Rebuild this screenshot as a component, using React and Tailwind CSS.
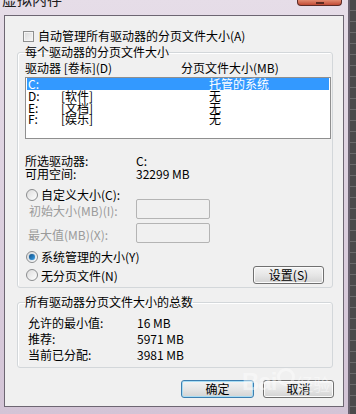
import React from "react";

function Radio({ checked }) {
  return (
    <span className="relative flex h-[12px] w-[12px] shrink-0 items-center justify-center rounded-full border border-[#8a8c8e] bg-gradient-to-br from-[#dcdcdc] to-[#ffffff]">
      {checked && (
        <span className="h-[6px] w-[6px] rounded-full bg-gradient-to-br from-[#0f4f86] to-[#3aa0e8] shadow-[0_0_1px_#1b6bb0]" />
      )}
    </span>
  );
}

function Btn({ children, w, def }) {
  return (
    <div
      className={
        "flex h-[18px] items-center justify-center rounded-[3px] border bg-gradient-to-b from-[#f4f4f4] via-[#e6e6e6] to-[#d3d3d3] text-[12px] leading-[12px] text-black " +
        (def
          ? "border-[#3c7fb1] shadow-[inset_0_0_0_1px_#a8dcf3]"
          : "border-[#707070] shadow-[inset_0_0_0_1px_#fbfbfb]")
      }
      style={{ width: w }}
    >
      {children}
    </div>
  );
}

export default function App() {
  return (
    <div className="flex h-[414px] w-[356px] overflow-hidden bg-[#4a4a4a] font-['Noto_Sans_CJK_SC',sans-serif] text-[12px] leading-[12px] text-black">
      {/* window */}
      <div className="relative flex h-full w-[350px] shrink-0 flex-col border-r-[2px] border-r-[#6a6270] bg-gradient-to-b from-[#e6dde8] to-[#d3c4d6]">
        {/* title bar */}
        <div className="flex h-[15px] items-start">
          <span className="-mt-[9px] ml-[2px] text-[15px] leading-[16px] text-[#1e1e1e]">虚拟内存</span>
          <div className="ml-auto mr-[6px] flex h-[6px] w-[45px] items-end justify-center rounded-b-[4px] border border-t-0 border-[#5b2a25] bg-gradient-to-b from-[#e28a70] to-[#c04a35]">
            <span className="mb-[1px] h-[2px] w-[8px] bg-[#5e2a20]" />
          </div>
        </div>

        {/* client panel */}
        <div className="ml-[4px] flex h-[392px] w-[340px] flex-col border border-[#6d6672] bg-[#f0f0f0]">
          {/* auto manage checkbox */}
          <div className="ml-[18px] mt-[14px] flex h-[12px] items-center gap-[4px]">
            <span className="h-[11px] w-[11px] border border-[#8e8f8f] bg-gradient-to-br from-[#d9d9d9] to-[#f7f7f7] shadow-[inset_0_0_0_1px_#f4f4f4]" />
            <span>自动管理所有驱动器的分页文件大小(A)</span>
          </div>

          {/* group 1 */}
          <fieldset className="ml-[12px] mt-[4px] w-[316px] rounded-[3px] border border-[#d3d7da] p-0 shadow-[inset_1px_1px_0_#ffffff]">
            <legend className="ml-[7px] px-0 leading-[12px]">每个驱动器的分页文件大小</legend>
            <div className="flex flex-col pb-[3px] pl-[7px] pt-[4px]">
              <div className="flex h-[12px]">
                <span className="w-[156px]">驱动器 [卷标](D)</span>
                <span>分页文件大小(MB)</span>
              </div>
              <div className="mt-[3px] flex h-[62px] w-[306px] flex-col border border-[#8f8f8f] bg-white text-[12px]">
                <div className="mx-[1px] flex h-[12px] items-center bg-[#3399ff] leading-[11.5px] text-white">
                  <span className="w-[34px] pl-[1px]">C:</span>
                  <span className="w-[148px]"></span>
                  <span>托管的系统</span>
                </div>
                {[
                  ["D:", "[软件]"],
                  ["E:", "[文档]"],
                  ["F:", "[娱乐]"],
                ].map(([d, l]) => (
                  <div key={d} className="mx-[1px] flex h-[11.5px] items-center leading-[11.5px]">
                    <span className="w-[34px] pl-[1px]">{d}</span>
                    <span className="w-[148px]">{l}</span>
                    <span>无</span>
                  </div>
                ))}
              </div>

              <div className="mt-[16px] flex h-[13px]">
                <span className="w-[111px]">所选驱动器:</span>
                <span>C:</span>
              </div>
              <div className="flex h-[12px]">
                <span className="w-[111px]">可用空间:</span>
                <span>32299 MB</span>
              </div>

              <div className="ml-[1px] mt-[9px] flex h-[12px] items-center gap-[3px]">
                <Radio />
                <span>自定义大小(C):</span>
              </div>
              <div className="-mt-[2px] flex h-[20px] items-center">
                <span className="w-[111px] pl-[4px] pt-[3px] text-[#9a9a9a]">初始大小(MB)(I):</span>
                <span className="h-[20px] w-[74px] rounded-[2px] border border-[#b4b4b4] bg-[#f0f0f0]" />
              </div>
              <div className="mt-[4px] flex h-[20px] items-center">
                <span className="w-[111px] pl-[3px] pt-[3px] text-[#9a9a9a]">最大值(MB)(X):</span>
                <span className="h-[20px] w-[74px] rounded-[2px] border border-[#b4b4b4] bg-[#f0f0f0]" />
              </div>

              <div className="ml-[1px] mt-[8px] flex h-[12px] items-center gap-[3px]">
                <Radio checked />
                <span>系统管理的大小(Y)</span>
              </div>
              <div className="ml-[1px] mt-[2px] flex h-[19px] items-center gap-[3px]">
                <Radio />
                <span className="pt-[2px]">无分页文件(N)</span>
                <div className="ml-auto mr-[8px]">
                  <Btn w="71px">设置(S)</Btn>
                </div>
              </div>
            </div>
          </fieldset>

          {/* group 2 */}
          <fieldset className="ml-[12px] mt-[8px] w-[316px] rounded-[3px] border border-[#d3d7da] p-0 shadow-[inset_1px_1px_0_#ffffff]">
            <legend className="ml-[7px] px-0 leading-[12px]">所有驱动器分页文件大小的总数</legend>
            <div className="flex flex-col pb-[4px] pl-[10px] pt-[7px]">
              {[
                ["允许的最小值:", "16 MB"],
                ["推荐:", "5971 MB"],
                ["当前已分配:", "3981 MB"],
              ].map(([k, v]) => (
                <div key={k} className="flex h-[16px] items-center">
                  <span className="w-[109px]">{k}</span>
                  <span>{v}</span>
                </div>
              ))}
            </div>
          </fieldset>

          {/* dialog buttons */}
          <div className="relative mt-[12px] flex justify-end gap-[9px] pr-[9px]">
            <Btn w="73px" def>
              确定
            </Btn>
            <Btn w="71px">取消</Btn>
            {/* watermark */}
            <div className="pointer-events-none absolute -top-[12px] left-[237px] flex items-end">
              <span className="font-['Liberation_Sans',sans-serif] text-[24px] font-bold leading-[24px] tracking-[-1px] text-white/45">Bai</span>
              <span className="mb-[8px] ml-[1px] flex h-[18px] w-[18px] items-center justify-center rounded-full border-[3px] border-white/40" />
              <span className="ml-[1px] text-[17px] leading-[20px] text-white/45">经验</span>
            </div>
          </div>
        </div>
      </div>
      {/* background strip */}
      <div className="h-full w-[6px] bg-[repeating-linear-gradient(to_bottom,#4a4a4a_0px,#4a4a4a_10px,#6a6a6a_10px,#6a6a6a_11px)]" />
    </div>
  );
}
